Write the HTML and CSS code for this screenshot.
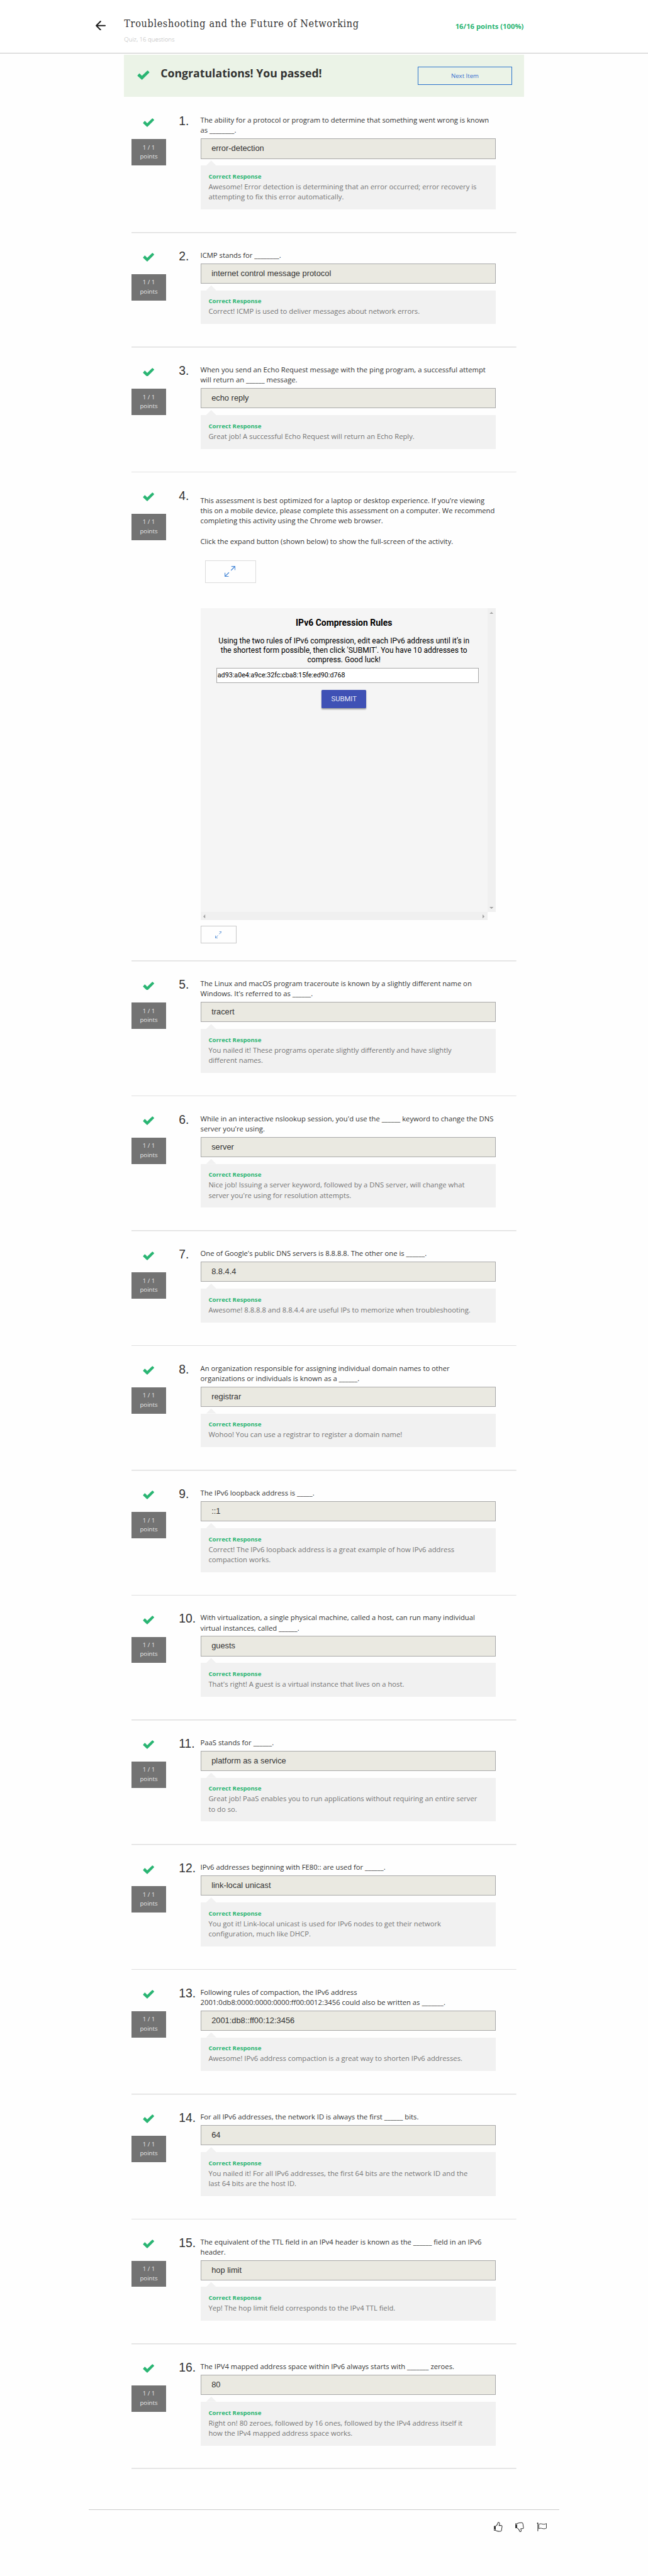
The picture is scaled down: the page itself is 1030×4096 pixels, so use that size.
FILE: index.html
```html
<!DOCTYPE html>
<html lang="en">
<head>
<meta charset="utf-8">
<title>Troubleshooting and the Future of Networking</title>
<link rel="stylesheet" href="styles.css">
</head>
<body>
<svg class="defs" aria-hidden="true">
  <symbol id="check" viewBox="0 0 34 26"><path d="M1 13.500 L5.200 8.600 Q6 7.900 6.900 8.600 L13 14.800 L27.500 .8 Q28.700 0 29.700 .8 L33.200 4.200 Q34 5.100 33.200 6 L14 25.300 Q13 26 12 25.300 L1 15 Q.3 14.200 1 13.500z" fill="#2ab573"/></symbol>
  <symbol id="expand" viewBox="0 0 32 32"><path d="M19 13 L31 1 M20 1 H31 V12 M13 19 L1 31 M1 20 V31 H12" fill="none" stroke="currentColor" stroke-width="2.400"/></symbol>
</svg>
<div class="page">
  <header class="header">
    <svg class="back" viewBox="0 0 29 29"><path d="M28 14.500 H2 M14.500 2 L2 14.500 L14.500 27" fill="none" stroke="#1f1f1f" stroke-width="3.800" stroke-linecap="round" stroke-linejoin="round"/></svg>
    <div class="heading">
      <h1 class="title">Troubleshooting and the Future of Networking</h1>
      <div class="subtitle">Quiz, 16 questions</div>
    </div>
    <div class="score">16/16 points (100%)</div>
  </header>

  <main class="main">
    <section class="banner">
      <svg class="banner-check"><use href="#check"/></svg>
      <h2 class="banner-title">Congratulations! You passed!</h2>
      <div class="next">Next Item</div>
    </section>

    <section class="question question-tall">
      <div class="status"><svg class="check"><use href="#check"/></svg><div class="points">1 / 1<br>points</div></div>
      <div class="number">1.</div>
      <div class="body">
        <p class="prompt">The ability for a protocol or program to determine that something went wrong is known<br>as ________.</p>
        <div class="answer">error-detection</div>
        <div class="feedback"><h3 class="verdict">Correct Response</h3><p class="note">Awesome! Error detection is determining that an error occurred; error recovery is<br>attempting to fix this error automatically.</p></div>
      </div>
    </section>

    <section class="question question-short">
      <div class="status"><svg class="check"><use href="#check"/></svg><div class="points">1 / 1<br>points</div></div>
      <div class="number">2.</div>
      <div class="body">
        <p class="prompt">ICMP stands for ________.</p>
        <div class="answer">internet control message protocol</div>
        <div class="feedback"><h3 class="verdict">Correct Response</h3><p class="note">Correct! ICMP is used to deliver messages about network errors.</p></div>
      </div>
    </section>

    <section class="question">
      <div class="status"><svg class="check"><use href="#check"/></svg><div class="points">1 / 1<br>points</div></div>
      <div class="number">3.</div>
      <div class="body">
        <p class="prompt">When you send an Echo Request message with the ping program, a successful attempt<br>will return an ______ message.</p>
        <div class="answer">echo reply</div>
        <div class="feedback"><h3 class="verdict">Correct Response</h3><p class="note">Great job! A successful Echo Request will return an Echo Reply.</p></div>
      </div>
    </section>

    <section class="question question-activity">
      <div class="status"><svg class="check"><use href="#check"/></svg><div class="points">1 / 1<br>points</div></div>
      <div class="number">4.</div>
      <div class="body">
        <p class="prompt intro">This assessment is best optimized for a laptop or desktop experience. If you’re viewing<br>this on a mobile device, please complete this assessment on a computer. We recommend<br>completing this activity using the Chrome web browser.<br><br>Click the expand button (shown below) to show the full-screen of the activity.</p>
        <div class="expand-sample"><svg class="expand-large"><use href="#expand"/></svg></div>
        <div class="frame">
          <div class="activity">
            <h3 class="activity-title">IPv6 Compression Rules</h3>
            <p class="activity-text">Using the two rules of IPv6 compression, edit each IPv6 address until it’s in<br>the shortest form possible, then click 'SUBMIT'. You have 10 addresses to<br>compress. Good luck!</p>
            <div class="address">ad93:a0e4:a9ce:32fc:cba8:15fe:ed90:d768</div>
            <div class="submit">SUBMIT</div>
          </div>
          <div class="bar bar-v">
            <svg class="tick-v" viewBox="0 0 12 6"><path d="M0 6 L6 0 L12 6z"/></svg>
            <svg class="tick-v" viewBox="0 0 12 6"><path d="M0 0 L6 6 L12 0z"/></svg>
          </div>
          <div class="bar bar-h">
            <svg class="tick-h" viewBox="0 0 6 12"><path d="M6 0 L0 6 L6 12z"/></svg>
            <svg class="tick-h" viewBox="0 0 6 12"><path d="M0 0 L6 6 L0 12z"/></svg>
          </div>
        </div>
        <div class="expand-button"><svg class="expand-small"><use href="#expand"/></svg></div>
      </div>
    </section>

    <section class="question question-tall">
      <div class="status"><svg class="check"><use href="#check"/></svg><div class="points">1 / 1<br>points</div></div>
      <div class="number">5.</div>
      <div class="body">
        <p class="prompt">The Linux and macOS program traceroute is known by a slightly different name on<br>Windows. It's referred to as ______.</p>
        <div class="answer">tracert</div>
        <div class="feedback"><h3 class="verdict">Correct Response</h3><p class="note">You nailed it! These programs operate slightly differently and have slightly<br>different names.</p></div>
      </div>
    </section>

    <section class="question question-tall">
      <div class="status"><svg class="check"><use href="#check"/></svg><div class="points">1 / 1<br>points</div></div>
      <div class="number">6.</div>
      <div class="body">
        <p class="prompt">While in an interactive nslookup session, you'd use the ______ keyword to change the DNS<br>server you're using.</p>
        <div class="answer">server</div>
        <div class="feedback"><h3 class="verdict">Correct Response</h3><p class="note">Nice job! Issuing a server keyword, followed by a DNS server, will change what<br>server you're using for resolution attempts.</p></div>
      </div>
    </section>

    <section class="question question-short">
      <div class="status"><svg class="check"><use href="#check"/></svg><div class="points">1 / 1<br>points</div></div>
      <div class="number">7.</div>
      <div class="body">
        <p class="prompt">One of Google's public DNS servers is 8.8.8.8. The other one is ______.</p>
        <div class="answer">8.8.4.4</div>
        <div class="feedback"><h3 class="verdict">Correct Response</h3><p class="note">Awesome! 8.8.8.8 and 8.8.4.4 are useful IPs to memorize when troubleshooting.</p></div>
      </div>
    </section>

    <section class="question">
      <div class="status"><svg class="check"><use href="#check"/></svg><div class="points">1 / 1<br>points</div></div>
      <div class="number">8.</div>
      <div class="body">
        <p class="prompt">An organization responsible for assigning individual domain names to other<br>organizations or individuals is known as a ______.</p>
        <div class="answer">registrar</div>
        <div class="feedback"><h3 class="verdict">Correct Response</h3><p class="note">Wohoo! You can use a registrar to register a domain name!</p></div>
      </div>
    </section>

    <section class="question">
      <div class="status"><svg class="check"><use href="#check"/></svg><div class="points">1 / 1<br>points</div></div>
      <div class="number">9.</div>
      <div class="body">
        <p class="prompt">The IPv6 loopback address is _____.</p>
        <div class="answer">::1</div>
        <div class="feedback"><h3 class="verdict">Correct Response</h3><p class="note">Correct! The IPv6 loopback address is a great example of how IPv6 address<br>compaction works.</p></div>
      </div>
    </section>

    <section class="question">
      <div class="status"><svg class="check"><use href="#check"/></svg><div class="points">1 / 1<br>points</div></div>
      <div class="number">10.</div>
      <div class="body">
        <p class="prompt">With virtualization, a single physical machine, called a host, can run many individual<br>virtual instances, called ______.</p>
        <div class="answer">guests</div>
        <div class="feedback"><h3 class="verdict">Correct Response</h3><p class="note">That's right! A guest is a virtual instance that lives on a host.</p></div>
      </div>
    </section>

    <section class="question">
      <div class="status"><svg class="check"><use href="#check"/></svg><div class="points">1 / 1<br>points</div></div>
      <div class="number">11.</div>
      <div class="body">
        <p class="prompt">PaaS stands for ______.</p>
        <div class="answer">platform as a service</div>
        <div class="feedback"><h3 class="verdict">Correct Response</h3><p class="note">Great job! PaaS enables you to run applications without requiring an entire server<br>to do so.</p></div>
      </div>
    </section>

    <section class="question">
      <div class="status"><svg class="check"><use href="#check"/></svg><div class="points">1 / 1<br>points</div></div>
      <div class="number">12.</div>
      <div class="body">
        <p class="prompt">IPv6 addresses beginning with FE80:: are used for ______.</p>
        <div class="answer">link-local unicast</div>
        <div class="feedback"><h3 class="verdict">Correct Response</h3><p class="note">You got it! Link-local unicast is used for IPv6 nodes to get their network<br>configuration, much like DHCP.</p></div>
      </div>
    </section>

    <section class="question">
      <div class="status"><svg class="check"><use href="#check"/></svg><div class="points">1 / 1<br>points</div></div>
      <div class="number">13.</div>
      <div class="body">
        <p class="prompt">Following rules of compaction, the IPv6 address<br>2001:0db8:0000:0000:0000:ff00:0012:3456 could also be written as _______.</p>
        <div class="answer">2001:db8::ff00:12:3456</div>
        <div class="feedback"><h3 class="verdict">Correct Response</h3><p class="note">Awesome! IPv6 address compaction is a great way to shorten IPv6 addresses.</p></div>
      </div>
    </section>

    <section class="question">
      <div class="status"><svg class="check"><use href="#check"/></svg><div class="points">1 / 1<br>points</div></div>
      <div class="number">14.</div>
      <div class="body">
        <p class="prompt">For all IPv6 addresses, the network ID is always the first ______ bits.</p>
        <div class="answer">64</div>
        <div class="feedback"><h3 class="verdict">Correct Response</h3><p class="note">You nailed it! For all IPv6 addresses, the first 64 bits are the network ID and the<br>last 64 bits are the host ID.</p></div>
      </div>
    </section>

    <section class="question">
      <div class="status"><svg class="check"><use href="#check"/></svg><div class="points">1 / 1<br>points</div></div>
      <div class="number">15.</div>
      <div class="body">
        <p class="prompt">The equivalent of the TTL field in an IPv4 header is known as the ______ field in an IPv6<br>header.</p>
        <div class="answer">hop limit</div>
        <div class="feedback"><h3 class="verdict">Correct Response</h3><p class="note">Yep! The hop limit field corresponds to the IPv4 TTL field.</p></div>
      </div>
    </section>

    <section class="question">
      <div class="status"><svg class="check"><use href="#check"/></svg><div class="points">1 / 1<br>points</div></div>
      <div class="number">16.</div>
      <div class="body">
        <p class="prompt">The IPV4 mapped address space within IPv6 always starts with _______ zeroes.</p>
        <div class="answer">80</div>
        <div class="feedback"><h3 class="verdict">Correct Response</h3><p class="note">Right on! 80 zeroes, followed by 16 ones, followed by the IPv4 address itself it<br>how the IPv4 mapped address space works.</p></div>
      </div>
    </section>
  </main>

  <footer class="footer">
    <svg class="tool" viewBox="0 0 30 30"><path d="M2 12 H7.500 V26 H2z" fill="#333"/><circle cx="4.700" cy="23.300" r="1.400" fill="#fff"/><path d="M7.500 12.500 C12 9.500 13 7 13.800 3 C14.300 .8 18 1 18.800 4 C19.200 6.500 18 8.500 17.300 10.500 H24 C26.500 11 26.500 13 26 15 L24.500 25 C24 27.500 22.500 28.200 20 28 C14 28.200 12 27 7.500 25.700" fill="none" stroke="#333" stroke-width="1.900"/></svg>
    <svg class="tool" viewBox="0 0 30 30"><path d="M2 4.500 H7.500 V18.500 H2z" fill="#333"/><circle cx="4.700" cy="7.200" r="1.400" fill="#fff"/><path d="M7.500 4.800 C13 2.500 17 2 21.500 2.300 C24 2.600 24.500 4 24.700 6 L26 15.500 C26.500 18.500 26 19.800 23.500 20 H18.500 C18 22 19.800 24 19.500 26.300 C19 29.300 15.500 29.500 14.500 27 C13.500 23 11.500 20.500 7.500 18" fill="none" stroke="#333" stroke-width="1.900"/></svg>
    <svg class="tool" viewBox="0 0 30 30"><circle cx="3" cy="4" r="2" fill="#333"/><path d="M3.500 4 V27.500" stroke="#333" stroke-width="2"/><path d="M6.500 7.500 C13 2 19 10.500 29 4.800 V18.500 C19 24 13 15 6.500 20.500z" fill="none" stroke="#333" stroke-width="1.800"/></svg>
  </footer>
</div>
</body>
</html>
```
FILE: styles.css
```css
* { box-sizing: border-box; }

html, body { margin: 0; padding: 0; background: #fefefe; }

h1, h2, h3, p { margin: 0; font-weight: 400; }

svg { display: block; flex: none; }

.defs { display: none; }

/* The layout is drawn on a 1920px grid and shown at a reduced scale. */
.page {
  width: 1920px;
  height: 7637px;
  overflow: hidden;
  zoom: 0.5363;
  background: #fefefe;
  color: #333;
  font-family: "Open Sans", sans-serif;
  font-size: 21px;
  line-height: 30px;
  white-space: nowrap;
}

.header {
  display: flex;
  align-items: flex-start;
  height: 158px;
  padding: 0 368px 0 284px;
  background: #fff;
  border-bottom: 2px solid #c4c4c4;
}

.back { width: 29px; height: 29px; margin: 61px 55px 0 0; }

.heading { flex: 1; padding-top: 50px; }

.title {
  font-family: "DejaVu Serif Condensed", "DejaVu Serif", serif;
  font-stretch: condensed;
  font-size: 30px;
  line-height: 40px;
  letter-spacing: 1.200px;
}

.subtitle {
  margin-top: 15px;
  font-size: 18px;
  font-weight: 300;
  line-height: 27px;
  color: #b5b5b5;
}

.score {
  padding-top: 63px;
  font-weight: 700;
  color: #2ab573;
}

.main { width: 1185px; margin: 4px 0 0 368px; }

.banner {
  display: flex;
  align-items: flex-start;
  height: 126px;
  margin-bottom: 3px;
  padding: 0 35px 0 38px;
  background: #ebf3e7;
}

.banner-check { width: 37px; height: 28px; margin-top: 46px; }

.banner-title {
  flex: 1;
  margin: 30px 0 0 33px;
  font-size: 33px;
  font-weight: 700;
  line-height: 50px;
}

.next {
  width: 280px;
  height: 54px;
  margin-top: 36px;
  border: 2px solid #2a73cc;
  color: #3a6fd0;
  font-size: 18px;
  line-height: 52px;
  text-align: center;
}

.question {
  display: flex;
  align-items: flex-start;
  width: 1140px;
  height: 370px;
  margin-left: 22px;
  padding-top: 51px;
  background: linear-gradient(#e0e0e0, #e0e0e0) bottom / 100% 3px no-repeat;
}

.question-short { height: 340px; }
.question-tall { height: 400px; }

.status {
  display: flex;
  flex-direction: column;
  align-items: center;
  width: 102px;
}

.check { width: 34px; height: 26px; margin-top: 8px; }

.points {
  width: 102px;
  height: 78px;
  margin-top: 37px;
  padding-top: 12px;
  background: #737373;
  color: #e6e6e6;
  font-size: 18px;
  line-height: 27px;
  text-align: center;
}

.number {
  width: 64px;
  margin-left: 38px;
  font-family: "Liberation Sans", Arial, sans-serif;
  font-size: 36px;
  line-height: 37px;
}

.body { width: 876px; }

.answer {
  height: 60px;
  margin-top: 9px;
  padding-left: 31px;
  border: 1px solid #a8a8a8;
  background: #eae9e1;
  font-family: "Liberation Sans", Arial, sans-serif;
  font-size: 24px;
  line-height: 57px;
}

.feedback {
  position: relative;
  margin-top: 20px;
  padding: 20px 24px 22px;
  background: #f1f1f1;
  color: #757575;
}

.feedback::before {
  content: "";
  position: absolute;
  top: -15px;
  left: 17px;
  width: 30px;
  height: 15px;
  background: #f1f1f1;
  clip-path: polygon(50% 0, 100% 100%, 0 100%);
}

.verdict {
  height: 28px;
  color: #2ab573;
  font-size: 18px;
  font-weight: 700;
  line-height: 27px;
}

/* Question with the embedded activity */
.question-activity { height: 1450px; }

.intro { margin-top: 18px; }

.expand-sample {
  width: 151px;
  height: 67px;
  margin: 41px 0 0 14px;
  padding: 16px 0 0 56px;
  border: 2px solid #dcdcdc;
  color: #4a8ad8;
}

.expand-large { width: 32px; height: 32px; }

.frame {
  display: grid;
  grid-template: 900px 25px / 851px 25px;
  margin-top: 76px;
}

.activity {
  padding-top: 27px;
  background: #f5f5f5;
  color: #000;
  font-family: Roboto, sans-serif;
  text-align: center;
}

.activity-title { font-size: 26px; font-weight: 700; line-height: 32px; }

.activity-text { margin-top: 25px; font-size: 22.500px; line-height: 28px; }

.address {
  width: 778px;
  height: 45px;
  margin: 8px 0 0 47px;
  padding-left: 2px;
  border: 1px solid #a9a9a9;
  background: #fff;
  font-size: 20px;
  line-height: 42px;
  text-align: left;
}

.submit {
  width: 132px;
  height: 54px;
  margin: 20px auto 0;
  border-radius: 3px;
  background: #3f51b5;
  box-shadow: 0 3px 4px rgba(0, 0, 0, 0.35);
  color: #e8eaf6;
  font-size: 21px;
  line-height: 56px;
}

.bar { display: flex; justify-content: space-between; background: #f0f0f0; fill: #a3a3a3; }
.bar-v { flex-direction: column; align-items: center; padding: 10px 0; }
.bar-h { align-items: center; padding: 0 9px; }
.tick-v { width: 12px; height: 6px; }
.tick-h { width: 6px; height: 12px; }

.expand-button {
  width: 108px;
  height: 54px;
  margin-top: 15px;
  padding: 16px 0 0 41px;
  border: 2px solid #c8c8c8;
  color: #2a73cc;
}

.expand-small { width: 20px; height: 20px; }

.footer {
  display: flex;
  justify-content: flex-end;
  gap: 34px;
  width: 1396px;
  margin: 120px 0 0 262px;
  padding: 35px 38px 0 0;
  border-top: 2px solid #ccc;
}

.tool { width: 30px; height: 30px; }
```
